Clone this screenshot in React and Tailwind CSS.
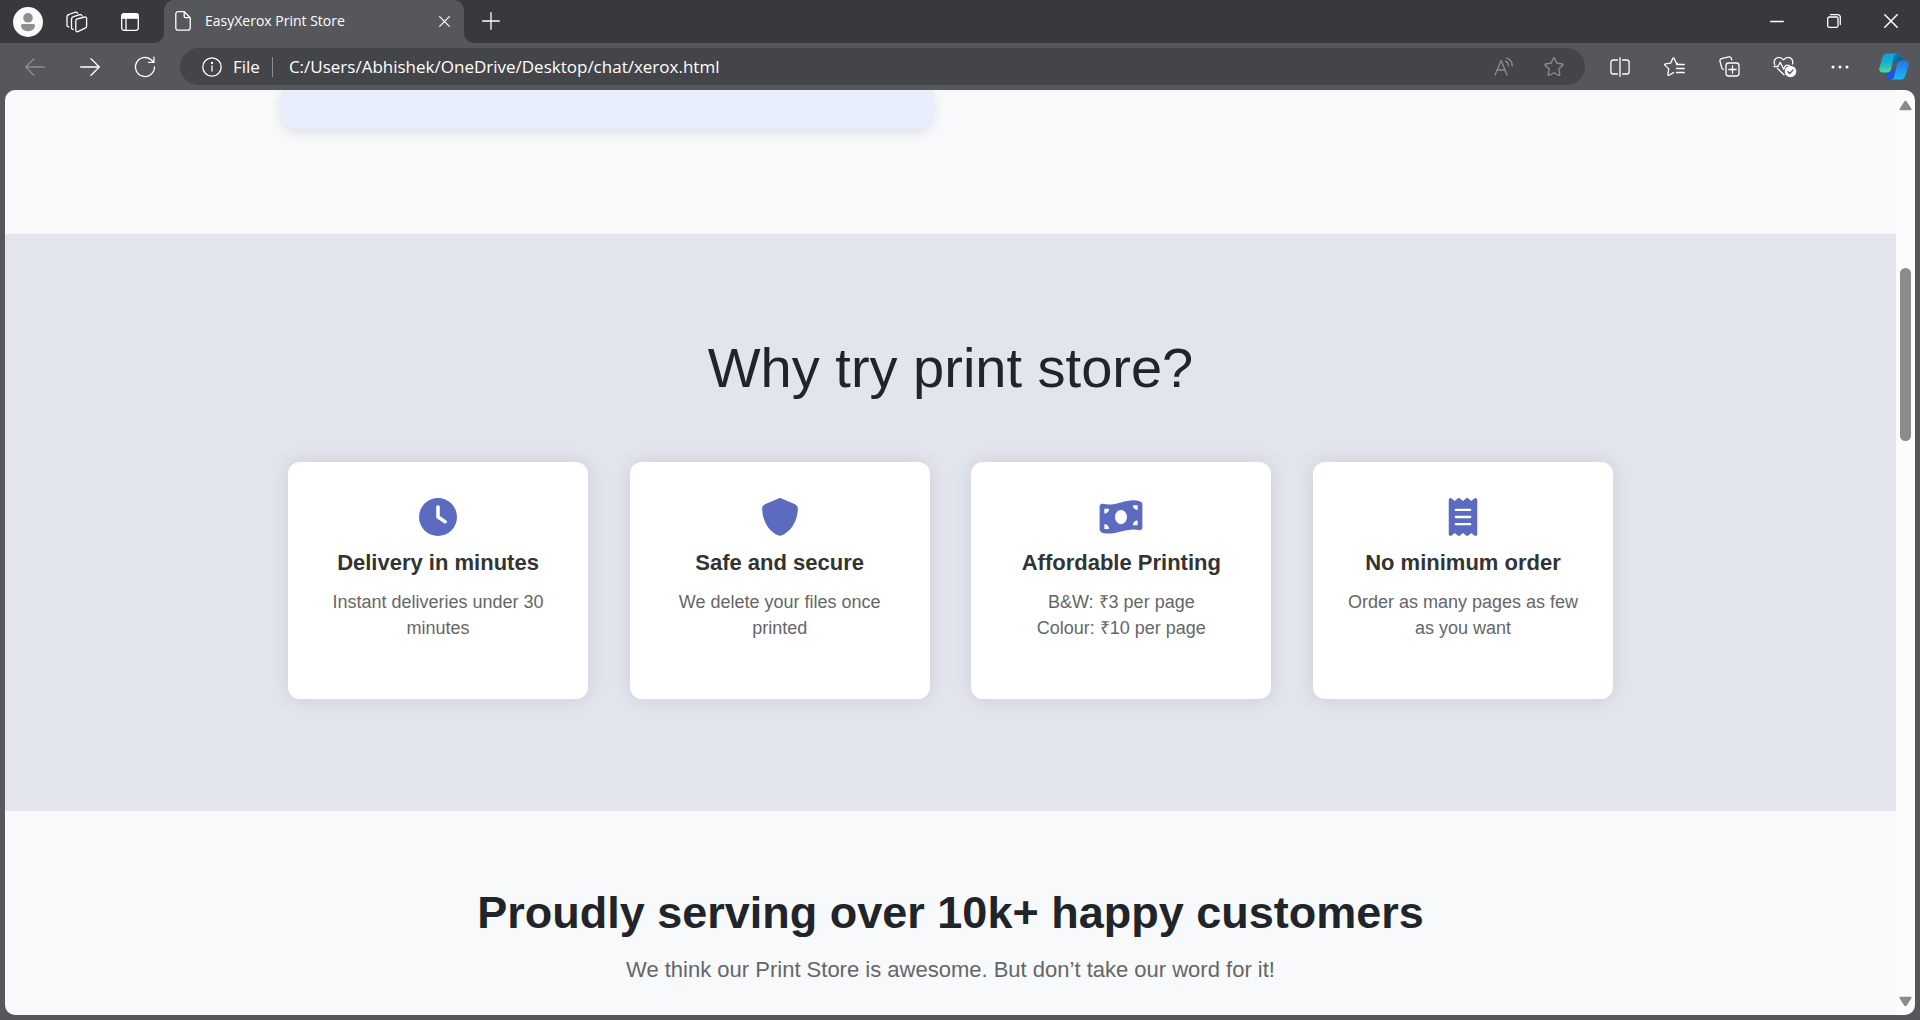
import { FaClock, FaMoneyBillWave, FaReceipt, FaShield } from "react-icons/fa6";

const stroke = {
  fill: "none",
  stroke: "currentColor",
  strokeWidth: 1.3,
  strokeLinecap: "round",
  strokeLinejoin: "round",
  "aria-hidden": true,
};

const AvatarIcon = () => (
  <svg width="30" height="30" viewBox="0 0 30 30" aria-hidden="true">
    <circle cx="15" cy="15" r="15" fill="#fafafa" />
    <circle cx="15" cy="10.8" r="4.8" fill="#8f8f8f" />
    <path d="M8 18.6A1.6 1.6 0 0 1 9.6 17h10.8a1.6 1.6 0 0 1 1.6 1.6c0 3.4-3 5.6-7 5.6s-7-2.2-7-5.6z" fill="#8f8f8f" />
  </svg>
);

const WorkspacesIcon = () => (
  <svg width="22" height="22" viewBox="0 0 22 22" {...stroke}>
    <path d="M10.6 8.2 18.6 6a1.6 1.6 0 0 1 2 1.600v7.600a2 2 0 0 1-1.400 1.900l-7.400 3.500a1.400 1.400 0 0 1-2-1.300v-9a2.200 2.200 0 0 1 .8-2.100z" />
    <path d="M7.200 18.300a1.500 1.500 0 0 1-1.700-1.500V8.200a2.600 2.600 0 0 1 2-2.500l6.500-2a1.700 1.700 0 0 1 2 1.200" />
    <path d="M2.900 15.800a1.500 1.500 0 0 1-1.900-1.400V6a2.600 2.600 0 0 1 1.900-2.500L9.400 1.200a1.700 1.700 0 0 1 2.100 1.100" />
  </svg>
);

const TabActionsIcon = () => (
  <svg width="18" height="18" viewBox="0 0 18 18" {...stroke}>
    <rect x=".7" y=".7" width="16.6" height="16.6" rx="2.5" />
    <path d="M.7 5.2V3.200A2.500 2.500 0 0 1 3.200.7h11.600a2.500 2.500 0 0 1 2.500 2.500v2z" fill="currentColor" />
    <path d="M5 5v12" />
  </svg>
);

const PageIcon = () => (
  <svg width="16" height="20" viewBox="0 0 16 20" {...stroke}>
    <path d="M3 .7h6.200l6 6V17a2.200 2.200 0 0 1-2.200 2.200H3A2.200 2.200 0 0 1 .8 17V2.900A2.200 2.200 0 0 1 3 .7z" />
    <path d="M9.200 1v4.200a1.500 1.500 0 0 0 1.500 1.500H15" />
  </svg>
);

const CrossIcon = ({ size }) => (
  <svg width={size} height={size} viewBox="0 0 12 12" {...stroke}>
    <path d="m.7.7 10.600 10.600M11.300.7.7 11.300" />
  </svg>
);

const PlusIcon = () => (
  <svg width="18" height="18" viewBox="0 0 18 18" {...stroke}>
    <path d="M9 .7v16.600M.7 9h16.600" />
  </svg>
);

const MinimizeIcon = () => (
  <svg width="14" height="14" viewBox="0 0 14 14" {...stroke}>
    <path d="M.7 7.500h12.600" />
  </svg>
);

const RestoreIcon = () => (
  <svg width="14" height="14" viewBox="0 0 14 14" {...stroke}>
    <rect x=".7" y="3" width="10.3" height="10.3" rx="1.5" />
    <path d="M3.500.7h7.300a2.500 2.500 0 0 1 2.500 2.500v7.300" />
  </svg>
);

const ArrowIcon = ({ className }) => (
  <svg className={className} width="20" height="18" viewBox="0 0 20 18" {...stroke}>
    <path d="M.7 9h18.600M11 .7 19.300 9 11 17.300" />
  </svg>
);

const ReloadIcon = () => (
  <svg width="22" height="22" viewBox="0 0 22 22" {...stroke}>
    <path d="M20.500 11a9.500 9.500 0 1 1-3.300-7.200l2.500 2.500" />
    <path d="M19.900 1.200v5.200h-5.300" />
  </svg>
);

const InfoIcon = () => (
  <svg width="20" height="20" viewBox="0 0 20 20" {...stroke}>
    <circle cx="10" cy="10" r="9.2" />
    <path d="M10 9v5" />
    <circle cx="10" cy="6" r=".5" fill="currentColor" />
  </svg>
);

const ReadAloudIcon = () => (
  <svg width="20" height="20" viewBox="0 0 20 20" {...stroke}>
    <path d="M1 18 7.200 3.500 13 18M3.100 13h8" />
    <path d="M11.500 4.200a4.500 4.500 0 0 1 2.800 4.600M12.500 1.200c3.400 1 5.800 4 5.700 7.800" />
  </svg>
);

const StarIcon = () => (
  <svg width="20" height="20" viewBox="0 0 20 20" {...stroke}>
    <path d="M9.400 1.300a.7.7 0 0 1 1.200 0l2.300 4.900 5.500.8a.7.7 0 0 1 .4 1.200l-4 3.800 1 5.500a.7.7 0 0 1-1 .8L10 15.700l-4.800 2.600a.7.7 0 0 1-1-.8l1-5.500-4-3.800A.7.7 0 0 1 1.600 7l5.500-.8z" />
  </svg>
);

const SplitIcon = () => (
  <svg width="20" height="20" viewBox="0 0 20 20" {...stroke}>
    <path d="M7.500 3H3.200A2.300 2.300 0 0 0 .9 5.300v9.400A2.300 2.300 0 0 0 3.200 17h4.300M12.500 3h4.300a2.300 2.300 0 0 1 2.300 2.300v9.400a2.300 2.300 0 0 1-2.300 2.300h-4.300M10 .7v18.600" />
  </svg>
);

const FavoritesIcon = () => (
  <svg width="21" height="20" viewBox="0 0 21 20" {...stroke}>
    <path d="M13.500 6.500 12.300 6.200 10.100 1.300a.7.7 0 0 0-1.200 0L6.600 6.100l-5.300.8a.7.7 0 0 0-.4 1.200l3.900 3.800-.9 5.500a.7.7 0 0 0 1 .8L9.500 15.600" />
    <path d="M12.500 7.500h7.800M12.500 11.500h7.800M12.500 15.500h7.800" />
  </svg>
);

const CollectionsIcon = () => (
  <svg width="21" height="21" viewBox="0 0 21 21" {...stroke}>
    <rect x="7" y="7" width="13" height="13" rx="2.5" />
    <path d="M13.500 9.800v7.400M9.800 13.500h7.400" />
    <path d="M4.400 13.300a2.200 2.200 0 0 1-1.700-1.600L1 5.300a2.200 2.200 0 0 1 1.600-2.700L9.800.9a2.200 2.200 0 0 1 2.600 1.600l.4 1.400" />
  </svg>
);

const EssentialsIcon = () => (
  <svg width="24" height="22" viewBox="0 0 24 22" {...stroke}>
    <path d="M1.700 8.500C.2 5 2.300 1.300 5.800 1.300c2 0 3.400.9 4.700 2.500 1.300-1.600 2.700-2.500 4.700-2.500 3.200 0 5.400 3.200 4.300 6.700M4.500 12.500l6.500 6.300" />
    <path d="M1 10.500h4l2.300-4.200 3.400 7 2-4h3.600" />
    <circle cx="17.5" cy="15.5" r="5.8" fill="#fff" stroke="none" />
    <path d="m14.900 15.700 1.800 1.800 3.500-3.600" stroke="#56575b" />
  </svg>
);

const MoreIcon = () => (
  <svg width="18" height="4" viewBox="0 0 18 4" fill="currentColor" aria-hidden="true">
    <circle cx="2" cy="2" r="1.5" />
    <circle cx="9" cy="2" r="1.5" />
    <circle cx="16" cy="2" r="1.5" />
  </svg>
);

const CopilotIcon = () => (
  <svg width="30" height="27" viewBox="0 0 30 27" aria-hidden="true">
    <defs>
      <linearGradient id="cpLeft" x1="0" y1="0" x2="0" y2="1">
        <stop offset="0" stopColor="#12a0dc" />
        <stop offset=".45" stopColor="#14aed0" />
        <stop offset="1" stopColor="#52d99a" />
      </linearGradient>
      <linearGradient id="cpRight" x1="0" y1="0" x2="0" y2="1">
        <stop offset="0" stopColor="#2a72e4" />
        <stop offset=".6" stopColor="#1d9cf5" />
        <stop offset="1" stopColor="#16b8f0" />
      </linearGradient>
      <linearGradient id="cpTop" x1="0" y1="0" x2="1" y2="1">
        <stop offset="0" stopColor="#0b8fc0" />
        <stop offset="1" stopColor="#0a5088" />
      </linearGradient>
    </defs>
    <path d="M13 .5h5.500c2.200 0 3.300 1.200 3.800 3l1.200 4.200h-4c-2 0-3.500 1-4 3L13 9z" fill="url(#cpTop)" />
    <path d="M6.500 19.500H9c2 0 3.400-1 4-3l3.500 1-1.300 6c-.5 1.800-1.700 3-3.700 3s-3.200-1.200-3.700-3z" fill="#1a55e0" />
    <path d="M8 .5h10.500c-2 0-3.200 1.200-3.700 3L12 16.500c-.6 2-2 3-4 3H3.500C1 19.500-.2 17.500.4 15L3.600 4C4.300 1.700 5.700.5 8 .5z" fill="url(#cpLeft)" />
    <path d="M21.800 26.500H11.500c2 0 3.200-1.200 3.700-3l3-13c.6-2 2-3 4-3h4.300c2.500 0 3.700 2 3.100 4.500l-3.300 10.800c-.6 2.300-2.200 3.700-4.500 3.700z" fill="url(#cpRight)" />
  </svg>
);

const toolbarButton = "flex w-[55px] shrink-0 items-center justify-center";
const addressButton = "flex w-[50px] shrink-0 items-center justify-center text-[#8d8e91]";
const windowButton = "flex w-[57px] shrink-0 items-center justify-center";

function TitleBar() {
  return (
    <header className="flex h-[43px] shrink-0 bg-[#38393c] px-px">
      <button aria-label="Profile" className="flex w-[54px] items-center justify-center"><AvatarIcon /></button>
      <button aria-label="Workspaces" className="flex w-11 items-center justify-center"><WorkspacesIcon /></button>
      <button aria-label="Tab actions" className="mr-[3px] flex w-[62px] items-center justify-center"><TabActionsIcon /></button>
      <div className="relative flex w-[300px] items-center rounded-t-[10px] bg-[#56575b] pr-3 pb-px pl-[11px]">
        <span className="absolute bottom-0 -left-[10px] size-[10px] bg-[#56575b]">
          <span className="block size-full rounded-br-[10px] bg-[#38393c]" />
        </span>
        <span className="absolute -right-[10px] bottom-0 size-[10px] bg-[#56575b]">
          <span className="block size-full rounded-bl-[10px] bg-[#38393c]" />
        </span>
        <PageIcon />
        <span className="ml-[14px] flex-1 truncate text-sm">EasyXerox Print Store</span>
        <button aria-label="Close tab" className="flex size-4 items-center justify-center"><CrossIcon size={11} /></button>
      </div>
      <button aria-label="New tab" className="flex w-[53px] items-center justify-center pb-px"><PlusIcon /></button>
      <div className="ml-auto flex pb-px">
        <button aria-label="Minimize" className={windowButton}><MinimizeIcon /></button>
        <button aria-label="Restore" className={windowButton}><RestoreIcon /></button>
        <button aria-label="Close window" className={windowButton}><CrossIcon size={14} /></button>
      </div>
    </header>
  );
}

function Toolbar() {
  return (
    <nav className="flex h-[47px] shrink-0 items-stretch py-[5px] pl-[7px]">
      <button aria-label="Back" disabled className={`${toolbarButton} text-[#8d8e91]`}><ArrowIcon className="rotate-180" /></button>
      <button aria-label="Forward" className={toolbarButton}><ArrowIcon /></button>
      <button aria-label="Reload" className={toolbarButton}><ReloadIcon /></button>
      <div className="mr-[7px] ml-2 flex min-w-0 flex-1 items-center rounded-full bg-[#444549] pr-[6px] pl-[22px]">
        <button className="flex shrink-0 items-center gap-[11px] text-[17px]"><InfoIcon />File</button>
        <span className="ml-3 h-5 w-px shrink-0 bg-[#8d8e91]" />
        <input
          aria-label="Address"
          defaultValue="C:/Users/Abhishek/OneDrive/Desktop/chat/xerox.html"
          className="ml-4 min-w-0 flex-1 bg-transparent text-[17px] outline-none"
        />
        <button aria-label="Read aloud" className={addressButton}><ReadAloudIcon /></button>
        <button aria-label="Add to favorites" className={addressButton}><StarIcon /></button>
      </div>
      <button aria-label="Split screen" className={toolbarButton}><SplitIcon /></button>
      <button aria-label="Favorites" className={toolbarButton}><FavoritesIcon /></button>
      <button aria-label="Collections" className={toolbarButton}><CollectionsIcon /></button>
      <button aria-label="Browser essentials" className={toolbarButton}><EssentialsIcon /></button>
      <button aria-label="More" className={toolbarButton}><MoreIcon /></button>
      <button aria-label="Copilot" className="flex w-[53px] shrink-0 items-center justify-center"><CopilotIcon /></button>
    </nav>
  );
}

const features = [
  { Icon: FaClock, title: "Delivery in minutes", lines: ["Instant deliveries under 30 minutes"] },
  { Icon: FaShield, title: "Safe and secure", lines: ["We delete your files once printed"] },
  { Icon: FaMoneyBillWave, title: "Affordable Printing", lines: ["B&W: ₹3 per page", "Colour: ₹10 per page"] },
  { Icon: FaReceipt, title: "No minimum order", lines: ["Order as many pages as few as you want"] },
];

function FeatureCard({ Icon, title, lines }) {
  return (
    <article className="flex min-h-[237px] w-[300px] flex-col items-center rounded-xl bg-white px-8 pt-9 text-center shadow-[0_0_20px_rgba(0,0,0,0.1)]">
      <Icon className="h-[38px] w-11 text-[#5c6bc0]" aria-hidden="true" />
      <h3 className="mt-[13px] text-[22px] leading-7 font-bold text-[#333]">{title}</h3>
      <div className="mt-3 text-lg leading-[26px] text-[#666]">
        {lines.map((line) => <p key={line}>{line}</p>)}
      </div>
    </article>
  );
}

function Page() {
  return (
    <main className="min-w-0 flex-1 overflow-hidden bg-[#f8f9fb] font-['Liberation_Sans',Arial,sans-serif] text-[#212529]">
      <div className="mx-auto flex h-36 w-full max-w-[1340px] items-start">
        <div className="h-[39px] w-[652px] rounded-b-2xl bg-[#e8eefd] shadow-[0_4px_12px_rgba(0,0,0,0.1)]" />
      </div>
      <section className="bg-[#e2e5ee] pt-[100px] pb-28">
        <h1 className="text-center text-[56px] leading-[67px] font-normal">Why try print store?</h1>
        <div className="mx-auto mt-[61px] flex max-w-[1325px] flex-wrap justify-between gap-y-8">
          {features.map((feature) => <FeatureCard key={feature.title} {...feature} />)}
        </div>
      </section>
      <section className="pt-[75px] text-center">
        <h2 className="text-[45px] leading-[54px] font-bold">Proudly serving over 10k+ happy customers</h2>
        <p className="mt-3 text-[22px] leading-9 text-[#666]">We think our Print Store is awesome. But don’t take our word for it!</p>
      </section>
    </main>
  );
}

function Scrollbar() {
  return (
    <div className="flex w-[19px] shrink-0 flex-col items-center bg-[#fcfcfc] pt-[10px] pb-2 text-[#8b8b8b]" aria-hidden="true">
      <svg width="13" height="11" viewBox="0 0 13 11" fill="currentColor">
        <path d="M5.300 1.500a1.500 1.500 0 0 1 2.400 0l4.600 7c.6.900.1 1.800-.9 1.800H1.600c-1 0-1.500-.9-.9-1.800z" />
      </svg>
      <div className="flex w-full flex-1 flex-col items-center pt-[157px]">
        <div className="h-[173px] w-[11px] rounded-full bg-[#8b8b8b]" />
      </div>
      <svg width="13" height="11" viewBox="0 0 13 11" fill="currentColor">
        <path d="M5.300 9.500a1.500 1.500 0 0 0 2.400 0l4.600-7c.6-.9.100-1.800-.9-1.800H1.600c-1 0-1.500.9-.9 1.800z" />
      </svg>
    </div>
  );
}

export default function App() {
  return (
    <div className="flex h-screen flex-col bg-[#56575b] font-['Open_Sans','Noto_Sans',sans-serif] text-white">
      <TitleBar />
      <Toolbar />
      <div className="mx-[5px] mb-[5px] flex min-h-0 flex-1 overflow-hidden rounded-[10px]">
        <Page />
        <Scrollbar />
      </div>
    </div>
  );
}
